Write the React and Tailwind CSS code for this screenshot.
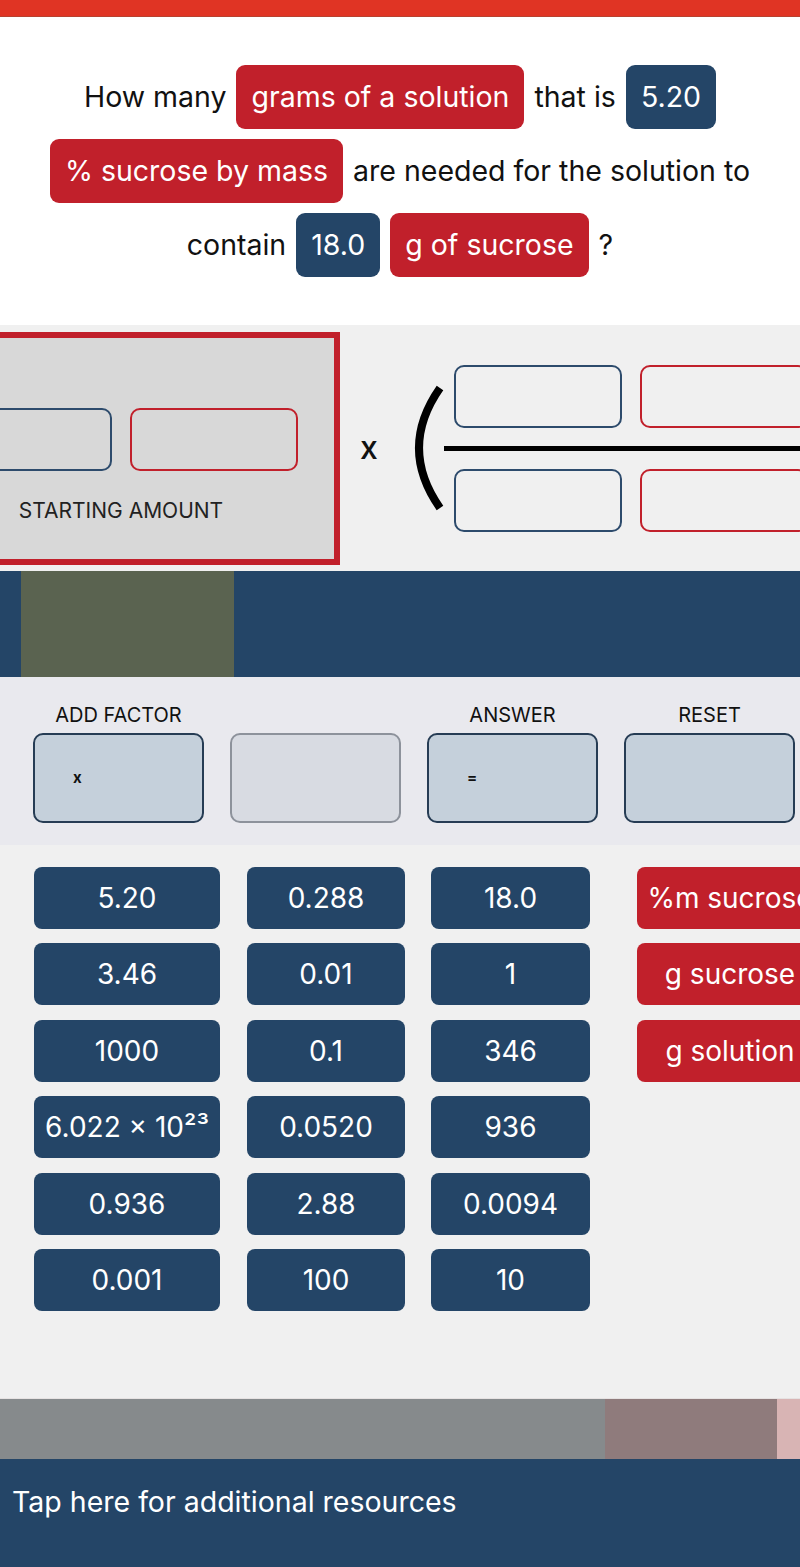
import React from 'react';

const Chip = ({ tone = 'red', children }) => (
    <span
        className={
            'inline-flex items-center h-[64px] px-[15px] rounded-[9px] text-white ' +
            (tone === 'red' ? 'bg-[#c1202b]' : 'bg-[#244567]')
        }
    >
        {children}
    </span>
);

const Slot = ({ tone }) => (
    <div
        className={
            'shrink-0 w-[168px] h-[63px] rounded-[10px] border-2 ' +
            (tone === 'red' ? 'border-[#c1202b]' : 'border-[#2d4b6c]')
        }
    />
);

const numbers = [
    ['5.20', '3.46', '1000', '6.022 × 10²³', '0.936', '0.001'],
    ['0.288', '0.01', '0.1', '0.0520', '2.88', '100'],
    ['18.0', '1', '346', '936', '0.0094', '10'],
];
const units = ['%m sucrose', 'g sucrose', 'g solution'];

const Token = ({ red, children }) => (
    <div
        className={
            'h-[62px] rounded-[8px] flex items-center justify-center text-white text-[28px] whitespace-nowrap ' +
            (red ? 'bg-[#c1202b]' : 'bg-[#244567]')
        }
    >
        {children}
    </div>
);

const App = () => {
    return (
        <div className="w-[800px] h-[1567px] overflow-hidden bg-[#f0f0f0] font-['Inter',sans-serif]">
            {/* top bar */}
            <div className="h-[17px] bg-[#e03424] border-b border-[#b8412f]" />

            {/* question */}
            <section className="h-[308px] bg-white flex flex-col items-center justify-center gap-[10px] text-[28.5px] text-[#111]">
                <div className="flex items-center gap-[10px]">
                    <span>How many</span>
                    <Chip>grams of a solution</Chip>
                    <span>that is</span>
                    <Chip tone="blue">5.20</Chip>
                </div>
                <div className="flex items-center gap-[10px]">
                    <Chip>% sucrose by mass</Chip>
                    <span>are needed for the solution to</span>
                </div>
                <div className="flex items-center gap-[10px]">
                    <span>contain</span>
                    <Chip tone="blue">18.0</Chip>
                    <Chip>g of sucrose</Chip>
                    <span>?</span>
                </div>
            </section>

            {/* equation */}
            <section className="h-[246px] bg-[#f0f0f0] flex items-center overflow-hidden">
                <div className="shrink-0 ml-[-98px] w-[438px] h-[233px] border-[6px] border-[#c1202b] bg-[#d8d8d8] pt-[70px] flex flex-col items-center">
                    <div className="flex gap-[18px]">
                        <Slot tone="blue" />
                        <Slot tone="red" />
                    </div>
                    <div className="mt-[24px] text-[21px] text-[#222]">STARTING AMOUNT</div>
                </div>
                <span className="shrink-0 ml-[20px] text-[32px] font-medium text-[#111]">x</span>
                <svg className="shrink-0 ml-[36px]" width="30" height="130" viewBox="0 0 30 130">
                    <path d="M26 5 Q-16 65 26 125" fill="none" stroke="#000" strokeWidth="8" />
                </svg>
                <div className="shrink-0 flex flex-col">
                    <div className="flex gap-[18px] pl-[10px]">
                        <Slot tone="blue" />
                        <Slot tone="red" />
                    </div>
                    <div className="h-[5px] w-[420px] bg-black my-[18px]" />
                    <div className="flex gap-[18px] pl-[10px]">
                        <Slot tone="blue" />
                        <Slot tone="red" />
                    </div>
                </div>
            </section>

            {/* dark band */}
            <div className="h-[106px] bg-[#244567] pl-[21px]">
                <div className="w-[213px] h-full bg-[#5a6350]" />
            </div>

            {/* actions */}
            <section className="h-[168px] bg-[#e9e9ee] pl-[33px] pt-[26px] flex gap-[26px]">
                {[
                    { label: 'ADD FACTOR', sign: 'x' },
                    { label: '', sign: '', muted: true },
                    { label: 'ANSWER', sign: '=' },
                    { label: 'RESET', sign: '' },
                ].map((b, i) => (
                    <div key={i} className="w-[171px] shrink-0 flex flex-col">
                        <div className="h-[24px] text-center text-[20px] leading-[24px] text-[#111]">{b.label}</div>
                        <div
                            className={
                                'mt-[6px] h-[90px] rounded-[10px] border-2 flex items-center pl-[38px] text-[15px] font-bold text-[#111] ' +
                                (b.muted ? 'bg-[#d8dbe2] border-[#8d929b]' : 'bg-[#c5d0db] border-[#263c54]')
                            }
                        >
                            {b.sign}
                        </div>
                    </div>
                ))}
            </section>

            {/* tokens */}
            <section className="h-[553px] pt-[22px] pl-[34px] flex overflow-hidden">
                <div className="w-[186px] shrink-0 flex flex-col gap-[14.4px]">
                    {numbers[0].map((n) => <Token key={n}>{n}</Token>)}
                </div>
                <div className="w-[158px] shrink-0 ml-[27px] flex flex-col gap-[14.4px]">
                    {numbers[1].map((n) => <Token key={n}>{n}</Token>)}
                </div>
                <div className="w-[159px] shrink-0 ml-[26px] flex flex-col gap-[14.4px]">
                    {numbers[2].map((n) => <Token key={n}>{n}</Token>)}
                </div>
                <div className="w-[186px] shrink-0 ml-[47px] flex flex-col gap-[14.4px]">
                    {units.map((u) => <Token key={u} red>{u}</Token>)}
                </div>
            </section>

            {/* progress strip */}
            <div className="h-[61px] flex border-t border-[#e6e2e2]">
                <div className="w-[605px] bg-[#868a8c]" />
                <div className="w-[172px] bg-[#8f7b7c]" />
                <div className="flex-1 bg-[#d8b4b4]" />
            </div>

            {/* footer */}
            <div className="h-[108px] bg-[#244567] pl-[12px] pt-[25px] text-[28.5px] leading-[36px] text-white">
                Tap here for additional resources
            </div>
        </div>
    );
};

export default App;
